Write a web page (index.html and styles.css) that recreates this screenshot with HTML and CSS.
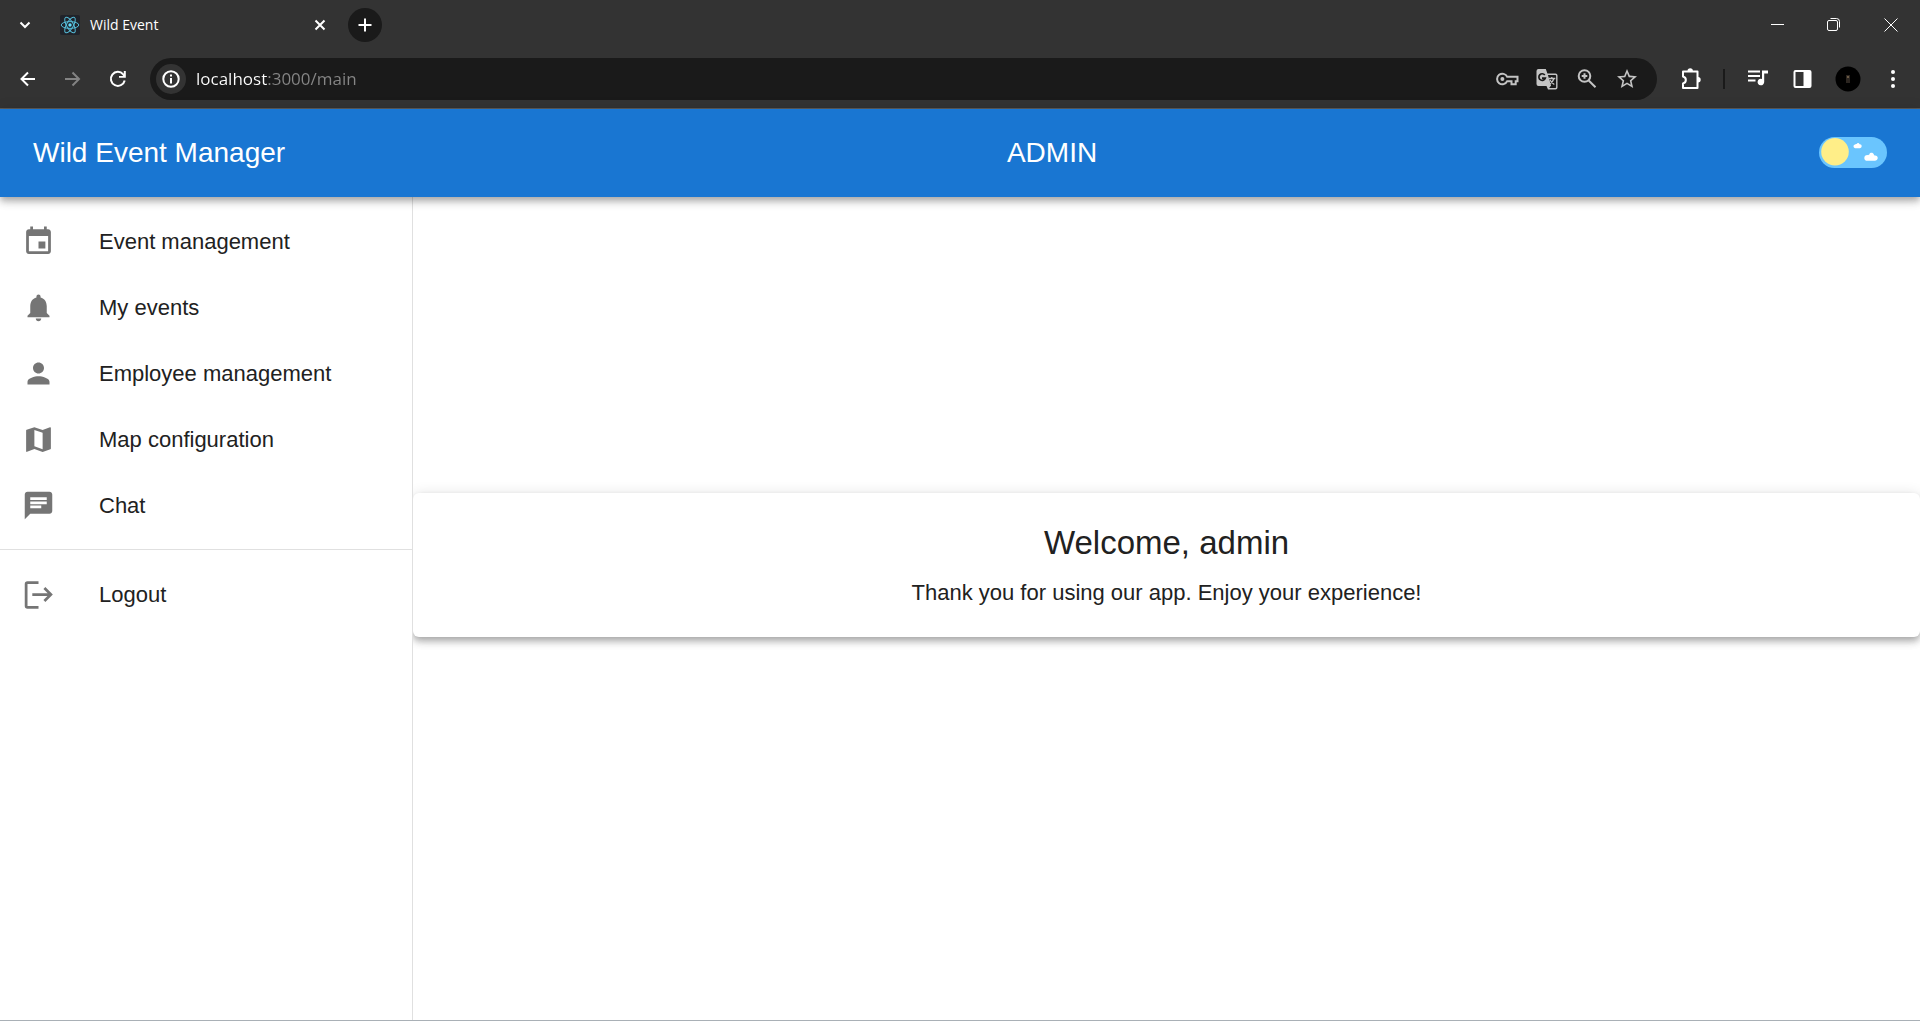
FILE: index.html
```html
<!DOCTYPE html>
<html lang="en">
<head>
<meta charset="utf-8">
<meta name="viewport" content="width=device-width, initial-scale=1">
<title>Wild Event</title>
<link rel="stylesheet" href="styles.css">
</head>
<body>
<div class="browser">
  <div class="tabstrip">
    <button class="tab-search" aria-label="Search tabs"><svg width="20" height="20" viewBox="0 0 20 20"><path class="line thick" d="M5.500 7.500l4.500 4.500 4.500-4.500"/></svg></button>
    <div class="tab">
      <svg class="favicon" width="20" height="20" viewBox="0 0 20 20"><rect width="20" height="20" rx="2" fill="#20232a"/><g fill="none" stroke="#55bcd8" stroke-width="1"><ellipse cx="10" cy="10" rx="8.800" ry="3.400"/><ellipse cx="10" cy="10" rx="8.800" ry="3.400" transform="rotate(60 10 10)"/><ellipse cx="10" cy="10" rx="8.800" ry="3.400" transform="rotate(120 10 10)"/></g><circle cx="10" cy="10" r="1.700" fill="#61dafb"/></svg>
      <span class="tab-title">Wild Event</span>
      <button class="tab-close" aria-label="Close tab"><svg width="20" height="20" viewBox="0 0 20 20"><path class="line thick" d="M5.500 5.500l9 9m0-9l-9 9"/></svg></button>
    </div>
    <button class="new-tab" aria-label="New tab"><svg width="20" height="20" viewBox="0 0 20 20"><path class="line thick" d="M10 3.500v13M3.500 10h13"/></svg></button>
    <div class="window-buttons">
      <button aria-label="Minimize"><svg width="20" height="16" viewBox="0 0 20 16"><path class="line" d="M6 7.500h13"/></svg></button>
      <button aria-label="Restore"><svg width="16" height="16" viewBox="0 0 16 16"><rect class="line" x="2.500" y="3.500" width="10" height="10" rx="1.500"/><path class="line" d="M5.500 1.500h6a3 3 0 0 1 3 3v6"/></svg></button>
      <button aria-label="Close"><svg width="16" height="16" viewBox="0 0 16 16"><path class="line" d="M1.500 1.500l13 13m0-13l-13 13"/></svg></button>
    </div>
  </div>
  <div class="toolbar">
    <button class="tool" aria-label="Back"><svg width="20" height="20" viewBox="0 0 20 20"><path class="line thick" d="M17 10H3.500M10 3.500L3.500 10l6.500 6.500"/></svg></button>
    <button class="tool dim" aria-label="Forward"><svg width="20" height="20" viewBox="0 0 20 20"><path class="line thick" d="M2 10h14M9.500 3.500L16 10l-6.500 6.500"/></svg></button>
    <button class="tool" aria-label="Reload"><svg width="20" height="20" viewBox="0 0 20 20"><path class="line thick" d="M16.700 11.500A7 7 0 1 1 15.200 5.300L16.500 7.500"/><path fill="currentColor" d="M17.800 2v6.800H11V6.900h4.800V2z"/></svg></button>
    <div class="address">
      <button class="site-info" aria-label="Site information"><svg width="20" height="20" viewBox="0 0 20 20"><circle class="line thick" cx="10" cy="10" r="7.700"/><path fill="currentColor" d="M9 9h2v5.500H9zM9 5.500h2v2H9z"/></svg></button>
      <input class="url" type="text" aria-label="Address" value="localhost:3000/main">
      <button class="page-tool" aria-label="Passwords"><svg width="24" height="24" viewBox="0 0 24 24"><path class="line thick" d="M12.200 9.800a5.300 5.300 0 1 0 0 4.400h4.300v3h4.200v-3h1.800V9.800z"/><circle cx="7.400" cy="12" r="2" fill="currentColor"/></svg></button>
      <button class="page-tool" aria-label="Translate"><svg width="24" height="24" viewBox="0 0 24 24"><path fill="currentColor" d="M3.500 2h7.300l1.600 4.500h8.100a2 2 0 0 1 2 2v12a2 2 0 0 1-2 2h-7.500L11.500 19h-8a2 2 0 0 1-2-2V4a2 2 0 0 1 2-2z"/><path fill="#1a1a1a" d="M12.900 8h7.400a.8.800 0 0 1 .8.800v11.500a.8.800 0 0 1-.8.800h-6.200l2-2.600z"/><path fill="none" stroke="#1a1a1a" stroke-width="1.700" d="M9.800 8a3.300 3.300 0 1 0 .5 3.200H7"/><path fill="none" stroke="currentColor" stroke-width="1.300" d="M14 11.500h6.300M16.800 10v1.500M18.900 11.500c-.6 2.400-2 4-3.900 5.200M15 13c1 1.700 2.500 3.400 4.300 4.500"/></svg></button>
      <button class="page-tool" aria-label="Zoom"><svg width="24" height="24" viewBox="0 0 24 24"><circle class="line thick" cx="9.500" cy="9" r="5.800"/><path class="line thick" d="M13.700 13.500l6.800 6.800M9.500 6.200v5.600M6.700 9h5.600"/></svg></button>
      <button class="page-tool" aria-label="Bookmark"><svg width="24" height="24" viewBox="0 0 24 24"><path fill="currentColor" d="M22 9.240l-7.190-.62L12 2 9.190 8.630 2 9.240l5.460 4.730L5.820 21 12 17.270 18.180 21l-1.630-7.030L22 9.240zM12 15.400l-3.760 2.270 1-4.280-3.320-2.880 4.380-.38L12 6.100l1.710 4.040 4.380.38-3.320 2.880 1 4.280L12 15.400z"/></svg></button>
    </div>
    <button class="tool" aria-label="Extensions"><svg width="24" height="24" viewBox="0 0 24 24"><path class="line thick" d="M4 4.500h14.500v16.500H4v-4.500c3.800-1 3.800-6 0-7z" stroke-linejoin="round"/><path fill="currentColor" d="M8.500 4a2.700 2.700 0 0 1 5.400 0zM19 10a2.700 2.700 0 0 1 0 5.400z"/></svg></button>
    <span class="separator"></span>
    <button class="tool" aria-label="Media controls"><svg width="24" height="24" viewBox="0 0 24 24"><path class="line thick" d="M2 4.500h12M2 9h12M2 13.500h7.500"/><path fill="currentColor" d="M16 3.500h6v3h-3.800v8.500a3.300 3.300 0 1 1-2.200-3.100z"/></svg></button>
    <button class="tool" aria-label="Side panel"><svg width="24" height="24" viewBox="0 0 24 24"><path fill="currentColor" fill-rule="evenodd" d="M4.500 3h14a2 2 0 0 1 2 2v14a2 2 0 0 1-2 2h-14a2 2 0 0 1-2-2V5a2 2 0 0 1 2-2zM4.500 5v14h8V5z"/></svg></button>
    <button class="tool" aria-label="Profile"><svg width="26" height="26" viewBox="0 0 26 26"><circle cx="13" cy="13" r="12.500" fill="#000"/><path fill="#2b2520" d="M11 9h4v8h-4z"/><path fill="#6b5a45" d="M12 10h2v2h-2z"/></svg></button>
    <button class="tool" aria-label="Menu"><svg width="24" height="24" viewBox="0 0 24 24"><g fill="currentColor"><circle cx="12" cy="5" r="2"/><circle cx="12" cy="12" r="2"/><circle cx="12" cy="19" r="2"/></g></svg></button>
  </div>
</div>

<header class="appbar">
  <h1 class="bar-text">Wild Event Manager</h1>
  <span class="bar-text">ADMIN</span>
  <label class="theme-switch">
    <input type="checkbox" aria-label="Dark mode">
    <svg width="68" height="32" viewBox="0 0 68 32"><rect width="68" height="31" rx="15.500" fill="#6ac5fe"/><circle cx="16" cy="14.800" r="13.800" fill="#ffee88"/><g fill="#fff"><path transform="translate(3 1.600) scale(.87)" d="M38 11a2.200 2.200 0 0 1-.2-4.300 2.500 2.500 0 0 1 2-.5c.6-1.500 2.800-1.500 3.400.2 1.500-.2 2.500.8 2.400 2.200-.1 1.500-.8 2.400-2.200 2.400z"/><path transform="translate(5 2.200) scale(.9)" d="M48 24c-2 0-3.200-1.400-3.200-3.200 0-1.900 1.500-3.300 4-3.100.9 0 1.400-.2 1.600-.9.800-2.300 4.300-2.200 5 .3.200.8.600 1 1.300.9 1.800-.1 3 1.100 3 2.900S58.200 24 56.500 24z"/></g></svg>
  </label>
</header>

<div class="workspace">
  <nav class="drawer">
    <ul class="menu">
      <li><a class="menu-item" href="#events"><svg viewBox="0 0 24 24"><path d="M17 12h-5v5h5v-5zM16 1v2H8V1H6v2H5c-1.110 0-1.990.9-1.990 2L3 19c0 1.100.89 2 2 2h14c1.100 0 2-.9 2-2V5c0-1.100-.9-2-2-2h-1V1h-2zm3 18H5V8h14v11z"/></svg>Event management</a></li>
      <li><a class="menu-item" href="#my-events"><svg viewBox="0 0 24 24"><path d="M12 22c1.100 0 2-.9 2-2h-4c0 1.100.89 2 2 2zm6-6v-5c0-3.070-1.640-5.640-4.500-6.320V4c0-.83-.67-1.500-1.500-1.500s-1.500.67-1.500 1.500v.68C7.630 5.360 6 7.920 6 11v5l-2 2v1h16v-1l-2-2z"/></svg>My events</a></li>
      <li><a class="menu-item" href="#employees"><svg viewBox="0 0 24 24"><path d="M12 12c2.210 0 4-1.790 4-4s-1.790-4-4-4-4 1.790-4 4 1.790 4 4 4zm0 2c-2.670 0-8 1.340-8 4v2h16v-2c0-2.660-5.330-4-8-4z"/></svg>Employee management</a></li>
      <li><a class="menu-item" href="#map"><svg viewBox="0 0 24 24"><path d="M20.500 3l-.16.030L15 5.100 9 3 3.360 4.900c-.21.070-.36.250-.36.480V20.500c0 .28.220.5.500.5l.16-.03L9 18.900l6 2.100 5.640-1.900c.21-.07.36-.25.360-.48V3.500c0-.28-.22-.5-.5-.5zM15 19l-6-2.110V5l6 2.110V19z"/></svg>Map configuration</a></li>
      <li><a class="menu-item" href="#chat"><svg viewBox="0 0 24 24"><path d="M20 2H4c-1.100 0-1.990.9-1.990 2L2 22l4-4h14c1.100 0 2-.9 2-2V4c0-1.100-.9-2-2-2zM6 9h12v2H6V9zm8 5H6v-2h8v2zm4-6H6V6h12v2z"/></svg>Chat</a></li>
    </ul>
    <ul class="menu">
      <li><a class="menu-item" href="#logout"><svg viewBox="0 0 24 24"><g fill="none" stroke="currentColor" stroke-width="2"><path d="M12 3H4a1 1 0 0 0-1 1v16a1 1 0 0 0 1 1h8" transform="translate(0 .3)"/><path d="M7.500 12h13M16.300 7.300L21 12l-4.700 4.700"/></g></svg>Logout</a></li>
    </ul>
  </nav>
  <main class="content">
    <section class="welcome">
      <h2>Welcome, admin</h2>
      <p>Thank you for using our app. Enjoy your experience!</p>
    </section>
  </main>
</div>
</body>
</html>
```
FILE: styles.css
```css
* {
  box-sizing: border-box;
}

body {
  margin: 0;
  min-height: 100vh;
  display: flex;
  flex-direction: column;
  background: #fff;
  border-bottom: 1px solid #a9b0b6;
  color: #212121;
  font-family: "Liberation Sans", Arial, sans-serif;
  font-size: 22px;
  line-height: 33px;
}

button {
  display: flex;
  align-items: center;
  justify-content: center;
  flex: none;
  padding: 0;
  border: 0;
  background: none;
  color: inherit;
}

svg {
  display: block;
  flex: none;
}

.line {
  fill: none;
  stroke: currentColor;
  stroke-width: 1;
}

.thick {
  stroke-width: 2;
}

/* Browser chrome */
.browser {
  background: #333;
  border-bottom: 1px solid #5c5c5c;
  color: #fff;
  font-family: "Open Sans", "Noto Sans", sans-serif;
}

.tabstrip {
  display: flex;
  align-items: center;
  height: 50px;
  padding-left: 10px;
}

.tab-search {
  width: 30px;
  height: 30px;
}

.tab {
  display: flex;
  align-items: center;
  gap: 10px;
  width: 270px;
  margin: 0 18px 0 20px;
  font-size: 14px;
  line-height: 20px;
}

.tab-title {
  flex: 1;
}

.new-tab {
  width: 34px;
  height: 34px;
  border-radius: 50%;
  background: #1a1a1a;
}

.window-buttons {
  display: flex;
  margin-left: auto;
}

.window-buttons button {
  width: 58px;
  height: 50px;
}

.toolbar {
  display: flex;
  align-items: center;
  height: 58px;
  padding: 0 5px;
}

.tool {
  width: 45px;
  height: 42px;
}

.dim {
  color: #838383;
}

.address {
  display: flex;
  align-items: center;
  flex: 1;
  min-width: 0;
  height: 42px;
  margin: 0 11px 0 10px;
  padding: 0 10px 0 6px;
  border-radius: 21px;
  background: #1a1a1a;
}

.site-info {
  width: 30px;
  height: 30px;
  border-radius: 50%;
  background: #333;
}

.url {
  flex: 1;
  min-width: 0;
  height: 30px;
  margin-left: 10px;
  padding: 0;
  border: 0;
  outline: 0;
  /* the host is bright, the port and path are dimmed */
  background: linear-gradient(to right, #fff 71px, #868686 71px);
  background-clip: text;
  color: transparent;
  font: inherit;
  font-size: 17px;
  line-height: 30px;
}

.page-tool {
  width: 40px;
  height: 42px;
  color: #c4c4c4;
}

.separator {
  width: 2px;
  height: 20px;
  margin: 0 10px;
  background: #1a1a1a;
}

/* Application bar */
.appbar {
  position: relative;
  z-index: 2;
  display: flex;
  align-items: center;
  justify-content: space-between;
  height: 88px;
  padding: 0 33px;
  background: #1976d2;
  box-shadow: 0 3px 6px -1px rgba(0, 0, 0, .2), 0 6px 7px 0 rgba(0, 0, 0, .14), 0 1px 14px 0 rgba(0, 0, 0, .12);
  color: #fff;
}

.bar-text {
  margin: 0;
  font-size: 28px;
  font-weight: 400;
  line-height: 44px;
}

.theme-switch {
  display: grid;
  cursor: pointer;
}

.theme-switch input,
.theme-switch svg {
  grid-area: 1 / 1;
}

.theme-switch input {
  width: 68px;
  height: 32px;
  margin: 0;
  opacity: 0;
}

/* Drawer and content */
.workspace {
  display: flex;
  flex: 1;
}

.drawer {
  position: relative;
  z-index: 1;
  flex: none;
  width: 413px;
  border-right: 1px solid #e0e0e0;
  background: #fff;
}

.menu {
  margin: 0;
  padding: 11px 0;
  list-style: none;
}

.menu + .menu {
  border-top: 1px solid #e0e0e0;
}

.menu-item {
  display: flex;
  align-items: center;
  gap: 44px;
  height: 66px;
  padding: 0 22px;
  color: inherit;
  text-decoration: none;
}

.menu-item svg {
  width: 33px;
  height: 33px;
  color: #757575;
  fill: currentColor;
}

.content {
  display: flex;
  align-items: center;
  flex: 1;
  min-width: 0;
  /* balances the bar above, so the card is centred on the whole page */
  padding-bottom: 88px;
}

.welcome {
  flex: 1;
  padding: 28px;
  border-radius: 6px;
  background: #fff;
  box-shadow: 0 3px 6px -1px rgba(0, 0, 0, .2), 0 6px 7px 0 rgba(0, 0, 0, .14), 0 1px 14px 0 rgba(0, 0, 0, .12);
  text-align: center;
}

.welcome h2 {
  margin: 0 0 11px;
  font-size: 33px;
  font-weight: 400;
  line-height: 44px;
}

.welcome p {
  margin: 0;
}
```
